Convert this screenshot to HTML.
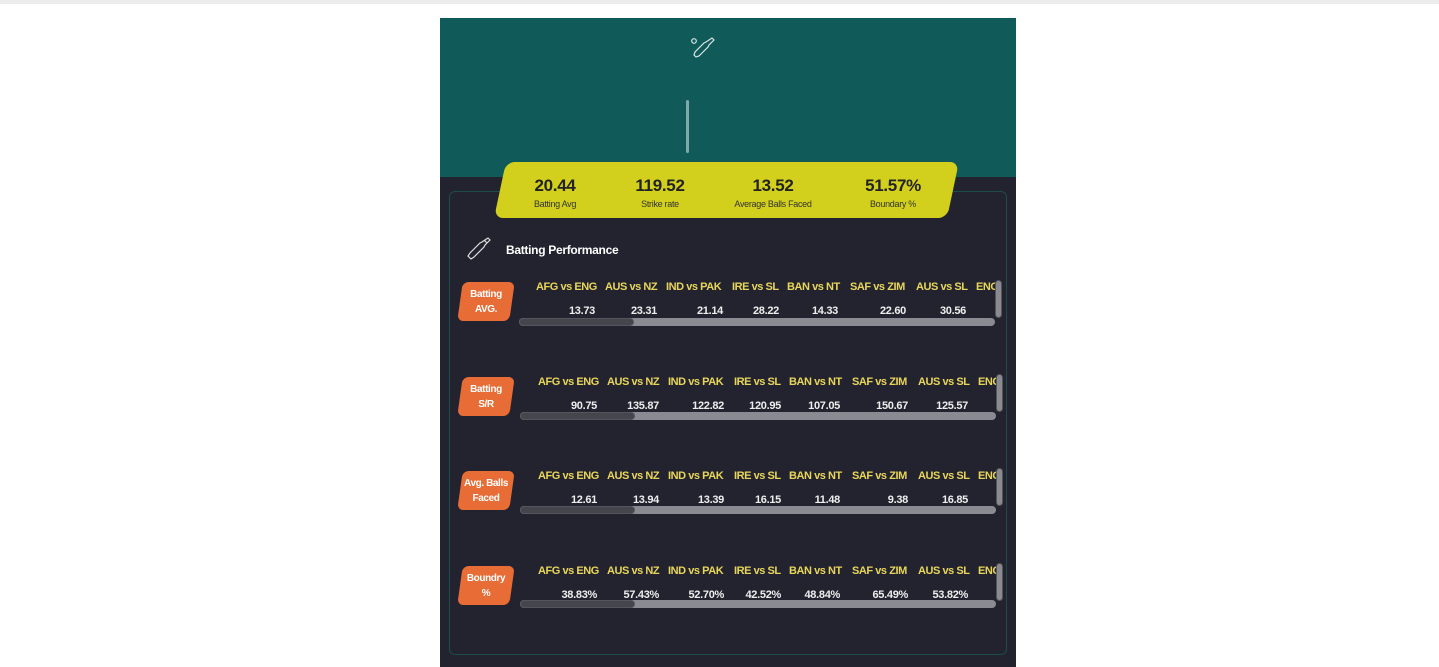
<!DOCTYPE html>
<html><head><style>
*{margin:0;padding:0;box-sizing:border-box}
body{width:1439px;height:667px;background:#fff;position:relative;overflow:hidden;font-family:"Liberation Sans",sans-serif}
.a{position:absolute}
.topbar{left:0;top:0;width:1439px;height:4px;background:#ececec}
.teal{left:440px;top:18px;width:576px;height:159px;background:#105a59}
.dark{left:440px;top:177px;width:576px;height:490px;background:#23232f}
.box{left:449px;top:191px;width:558px;height:464px;border:1px solid #1b4d4c;border-radius:6px}
.yel{left:500px;top:162px;width:453px;height:56px;background:#d2d01d;transform:skewX(-12deg);border-radius:9px}
.st{top:176px;width:140px;text-align:center;color:#222}
.st b{display:block;font-size:17px;letter-spacing:-0.3px}
.st span{display:block;font-size:9px;color:#333;margin-top:3px;letter-spacing:-0.3px}
.badge{left:460px;width:52px;height:39px;background:#e76c35;transform:skewX(-8deg);border-radius:6px}
.bt{position:absolute;left:460px;width:52px;height:39px;color:#fff;font-size:10px;font-weight:bold;text-align:center;display:flex;align-items:center;justify-content:center;line-height:15px;letter-spacing:-0.4px}
.hr{position:absolute;left:518px;width:482px;height:14px;overflow:hidden}
.hr span{position:absolute;top:0;color:#e8d65a;font-size:11px;font-weight:bold;letter-spacing:-0.45px;white-space:nowrap}
.vl{color:#eee;font-size:11px;font-weight:bold;letter-spacing:-0.3px;text-align:right;width:60px}
.track{left:519px;width:476px;height:8px;background:#8a8a92;border-radius:4px}
.thumb{left:519px;width:115px;height:8px;background:#45454d;border-radius:4px;border:1px solid #55555d}
.vs{width:7px;height:38px;background:#8a8a92;border-radius:4px;border:1px solid #555}
</style></head><body>
<div class="a topbar"></div>
<div class="a teal"></div>
<div class="a dark"></div>
<svg class="a" style="left:689px;top:36px" width="28" height="28" viewBox="0 0 28 28" fill="none" stroke="#d8e6e6" stroke-width="1.2"><circle cx="5" cy="5" r="2.3"/><path d="M23 2l2 2-5 5-1 2-9 9-3 1-2-2 1-3 9-9 2-1z"/></svg>
<div class="a" style="left:686px;top:100px;width:3px;height:53px;background:#7fa8a8;border-radius:2px"></div>
<div class="a box"></div>
<div class="a yel"></div>
<div class="a st" style="left:485px"><b>20.44</b><span>Batting Avg</span></div>
<div class="a st" style="left:590px"><b>119.52</b><span>Strike rate</span></div>
<div class="a st" style="left:703px"><b>13.52</b><span>Average Balls Faced</span></div>
<div class="a st" style="left:823px"><b>51.57%</b><span>Boundary %</span></div>
<svg class="a" style="left:464px;top:236px" width="28" height="28" viewBox="0 0 28 28" fill="none" stroke="#ddd" stroke-width="1.2"><path d="M24 2l2 2-5 5-1 2-10 10-3 2-3-3 2-3 10-10 2-1z"/><path d="M20 4l3 3"/></svg>
<div class="a" style="left:506px;top:243px;color:#fff;font-size:12px;font-weight:bold;letter-spacing:-0.3px">Batting Performance</div>

<div class="a badge" style="top:282px"></div><div class="bt" style="top:282px">Batting<br>AVG.</div>
<div class="a badge" style="top:377px"></div><div class="bt" style="top:377px">Batting<br>S/R</div>
<div class="a badge" style="top:471px"></div><div class="bt" style="top:471px">Avg. Balls<br>Faced</div>
<div class="a badge" style="top:566px"></div><div class="bt" style="top:566px">Boundry<br>%</div>

<div class="hr" style="top:281px"><span style="left:18px">AFG vs ENG</span><span style="left:87px">AUS vs NZ</span><span style="left:148px">IND vs PAK</span><span style="left:214px">IRE vs SL</span><span style="left:269px">BAN vs NT</span><span style="left:332px">SAF vs ZIM</span><span style="left:398px">AUS vs SL</span><span style="left:458px">ENG</span></div>
<div class="hr" style="top:376px;left:520px"><span style="left:18px">AFG vs ENG</span><span style="left:87px">AUS vs NZ</span><span style="left:148px">IND vs PAK</span><span style="left:214px">IRE vs SL</span><span style="left:269px">BAN vs NT</span><span style="left:332px">SAF vs ZIM</span><span style="left:398px">AUS vs SL</span><span style="left:458px">ENG</span></div>
<div class="hr" style="top:470px;left:520px"><span style="left:18px">AFG vs ENG</span><span style="left:87px">AUS vs NZ</span><span style="left:148px">IND vs PAK</span><span style="left:214px">IRE vs SL</span><span style="left:269px">BAN vs NT</span><span style="left:332px">SAF vs ZIM</span><span style="left:398px">AUS vs SL</span><span style="left:458px">ENG</span></div>
<div class="hr" style="top:565px;left:520px"><span style="left:18px">AFG vs ENG</span><span style="left:87px">AUS vs NZ</span><span style="left:148px">IND vs PAK</span><span style="left:214px">IRE vs SL</span><span style="left:269px">BAN vs NT</span><span style="left:332px">SAF vs ZIM</span><span style="left:398px">AUS vs SL</span><span style="left:458px">ENG</span></div>

<div class="a vl" style="left:535px;top:305px">13.73</div><div class="a vl" style="left:597px;top:305px">23.31</div><div class="a vl" style="left:663px;top:305px">21.14</div><div class="a vl" style="left:719px;top:305px">28.22</div><div class="a vl" style="left:778px;top:305px">14.33</div><div class="a vl" style="left:846px;top:305px">22.60</div><div class="a vl" style="left:906px;top:305px">30.56</div>
<div class="a vl" style="left:537px;top:400px">90.75</div><div class="a vl" style="left:599px;top:400px">135.87</div><div class="a vl" style="left:664px;top:400px">122.82</div><div class="a vl" style="left:721px;top:400px">120.95</div><div class="a vl" style="left:780px;top:400px">107.05</div><div class="a vl" style="left:848px;top:400px">150.67</div><div class="a vl" style="left:908px;top:400px">125.57</div>
<div class="a vl" style="left:537px;top:494px">12.61</div><div class="a vl" style="left:599px;top:494px">13.94</div><div class="a vl" style="left:664px;top:494px">13.39</div><div class="a vl" style="left:721px;top:494px">16.15</div><div class="a vl" style="left:780px;top:494px">11.48</div><div class="a vl" style="left:848px;top:494px">9.38</div><div class="a vl" style="left:908px;top:494px">16.85</div>
<div class="a vl" style="left:537px;top:589px">38.83%</div><div class="a vl" style="left:599px;top:589px">57.43%</div><div class="a vl" style="left:664px;top:589px">52.70%</div><div class="a vl" style="left:721px;top:589px">42.52%</div><div class="a vl" style="left:780px;top:589px">48.84%</div><div class="a vl" style="left:848px;top:589px">65.49%</div><div class="a vl" style="left:908px;top:589px">53.82%</div>

<div class="a track" style="top:318px"></div><div class="a thumb" style="top:318px"></div>
<div class="a track" style="top:412px;left:520px"></div><div class="a thumb" style="top:412px;left:520px"></div>
<div class="a track" style="top:506px;left:520px"></div><div class="a thumb" style="top:506px;left:520px"></div>
<div class="a track" style="top:600px;left:520px"></div><div class="a thumb" style="top:600px;left:520px"></div>
<div class="a vs" style="left:995px;top:280px"></div>
<div class="a vs" style="left:996px;top:374px"></div>
<div class="a vs" style="left:996px;top:468px"></div>
<div class="a vs" style="left:996px;top:563px"></div>
</body></html>
